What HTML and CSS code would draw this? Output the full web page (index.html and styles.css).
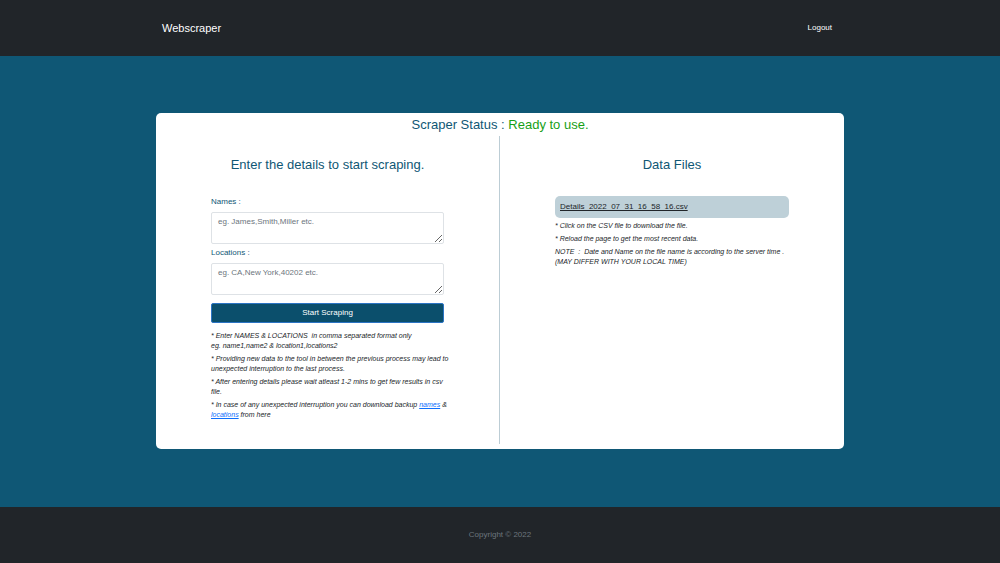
FILE: index.html
```html
<!DOCTYPE html>
<html lang="en">
<head>
<meta charset="utf-8">
<meta name="viewport" content="width=device-width, initial-scale=1">
<title>Webscraper</title>
<link rel="stylesheet" href="styles.css">
</head>
<body class="page">
<header class="topbar">
  <nav class="container topbar-nav">
    <a class="brand" href="#">Webscraper</a>
    <a class="logout" href="#">Logout</a>
  </nav>
</header>
<main class="main">
  <section class="container card">
    <h1 class="heading">Scraper Status : <span class="ready">Ready to use.</span></h1>
    <div class="columns">
      <section class="column column-form">
        <h2 class="heading column-title">Enter the details to start scraping.</h2>
        <form class="form">
          <label class="label" for="names">Names :</label>
          <textarea class="field" id="names" placeholder="eg. James,Smith,Miller etc."></textarea>
          <label class="label" for="locations">Locations :</label>
          <textarea class="field" id="locations" placeholder="eg. CA,New York,40202 etc."></textarea>
          <button class="submit" type="button">Start Scraping</button>
        </form>
        <div class="notes">
          <p class="note">* Enter NAMES &amp; LOCATIONS&nbsp; in comma separated format only<br>eg. name1,name2 &amp; location1,locations2</p>
          <p class="note">* Providing new data to the tool in between the previous process may lead to<br>unexpected interruption to the last process.</p>
          <p class="note">* After entering details please wait atleast 1-2 mins to get few results in csv<br>file.</p>
          <p class="note">* In case of any unexpected interruption you can download backup <a class="link" href="#">names</a> &amp;<br><a class="link" href="#">locations</a> from here</p>
        </div>
      </section>
      <section class="column">
        <h2 class="heading column-title">Data Files</h2>
        <div class="file"><a class="file-link" href="#">Details_2022_07_31_16_58_16.csv</a></div>
        <div class="notes">
          <p class="note">* Click on the CSV file to download the file.</p>
          <p class="note">* Reload the page to get the most recent data.</p>
          <p class="note">NOTE &nbsp;:&nbsp; Date and Name on the file name is according to the server time .<br>(MAY DIFFER WITH YOUR LOCAL TIME)</p>
        </div>
      </section>
    </div>
  </section>
</main>
<footer class="footer">Copyright © 2022</footer>
</body>
</html>
```

FILE: styles.css
```css
* { box-sizing: border-box; }

.page {
  margin: 0;
  min-height: 100vh;
  display: flex;
  flex-direction: column;
  background: #0f5775;
  color: #212529;
  font: 8px/12px "Liberation Sans", Arial, sans-serif;
}

.container {
  width: 100%;
  max-width: 688px;
  margin: 0 auto;
}

.topbar {
  padding: 20px 0;
  background: #212529;
}

.topbar-nav {
  display: flex;
  align-items: center;
  justify-content: space-between;
  padding: 0 12px 0 6px;
}

.brand {
  color: #fff;
  font-size: 11px;
  line-height: 16px;
  text-decoration: none;
}

.logout {
  color: #fff;
  text-decoration: none;
}

.main {
  flex: 1;
  padding: 57px 0;
}

.card {
  padding: 4px 0 5px;
  border-radius: 5px;
  background: #fff;
}

.heading {
  margin: 0;
  color: #0f5775;
  font-size: 13px;
  font-weight: 400;
  line-height: 16px;
  text-align: center;
}

.ready { color: #17a017; }

.columns {
  display: grid;
  grid-template-columns: 1fr 1fr;
  margin-top: 3px;
}

.column {
  min-width: 0;
  padding: 21px 55px 24px;
}

.column-form { border-right: 1px solid #bccdd5; }

.column-title { margin-bottom: 23px; }

.form {
  display: flex;
  flex-direction: column;
}

.label {
  margin-bottom: 4px;
  color: #0f5775;
}

.field {
  height: 32px;
  margin-bottom: 3px;
  padding: 3px 6px;
  border: 1px solid #dee2e6;
  border-radius: 2px;
  background: #fff;
  color: #212529;
  font: inherit;
  resize: vertical;
}

.field::placeholder { color: #6c757d; }

.submit {
  margin-top: 5px;
  padding: 3px 6px;
  border: 1px solid #2b74c4;
  border-radius: 2px;
  background: #0b4f6c;
  color: #fff;
  font: inherit;
}

.notes {
  display: flex;
  flex-direction: column;
  gap: 3px;
  margin-top: 8px;
}

.note {
  margin: 0;
  font-size: 7px;
  font-style: italic;
  line-height: 10px;
  white-space: nowrap;
}

.link { color: #0d6efd; }

.file {
  padding: 5px;
  border-radius: 5px;
  background: #bed0d8;
}

.file-link { color: #212529; }

.file + .notes { margin-top: 3px; }

.footer {
  padding: 22px 0;
  background: #212529;
  color: #6c757d;
  text-align: center;
}
```
